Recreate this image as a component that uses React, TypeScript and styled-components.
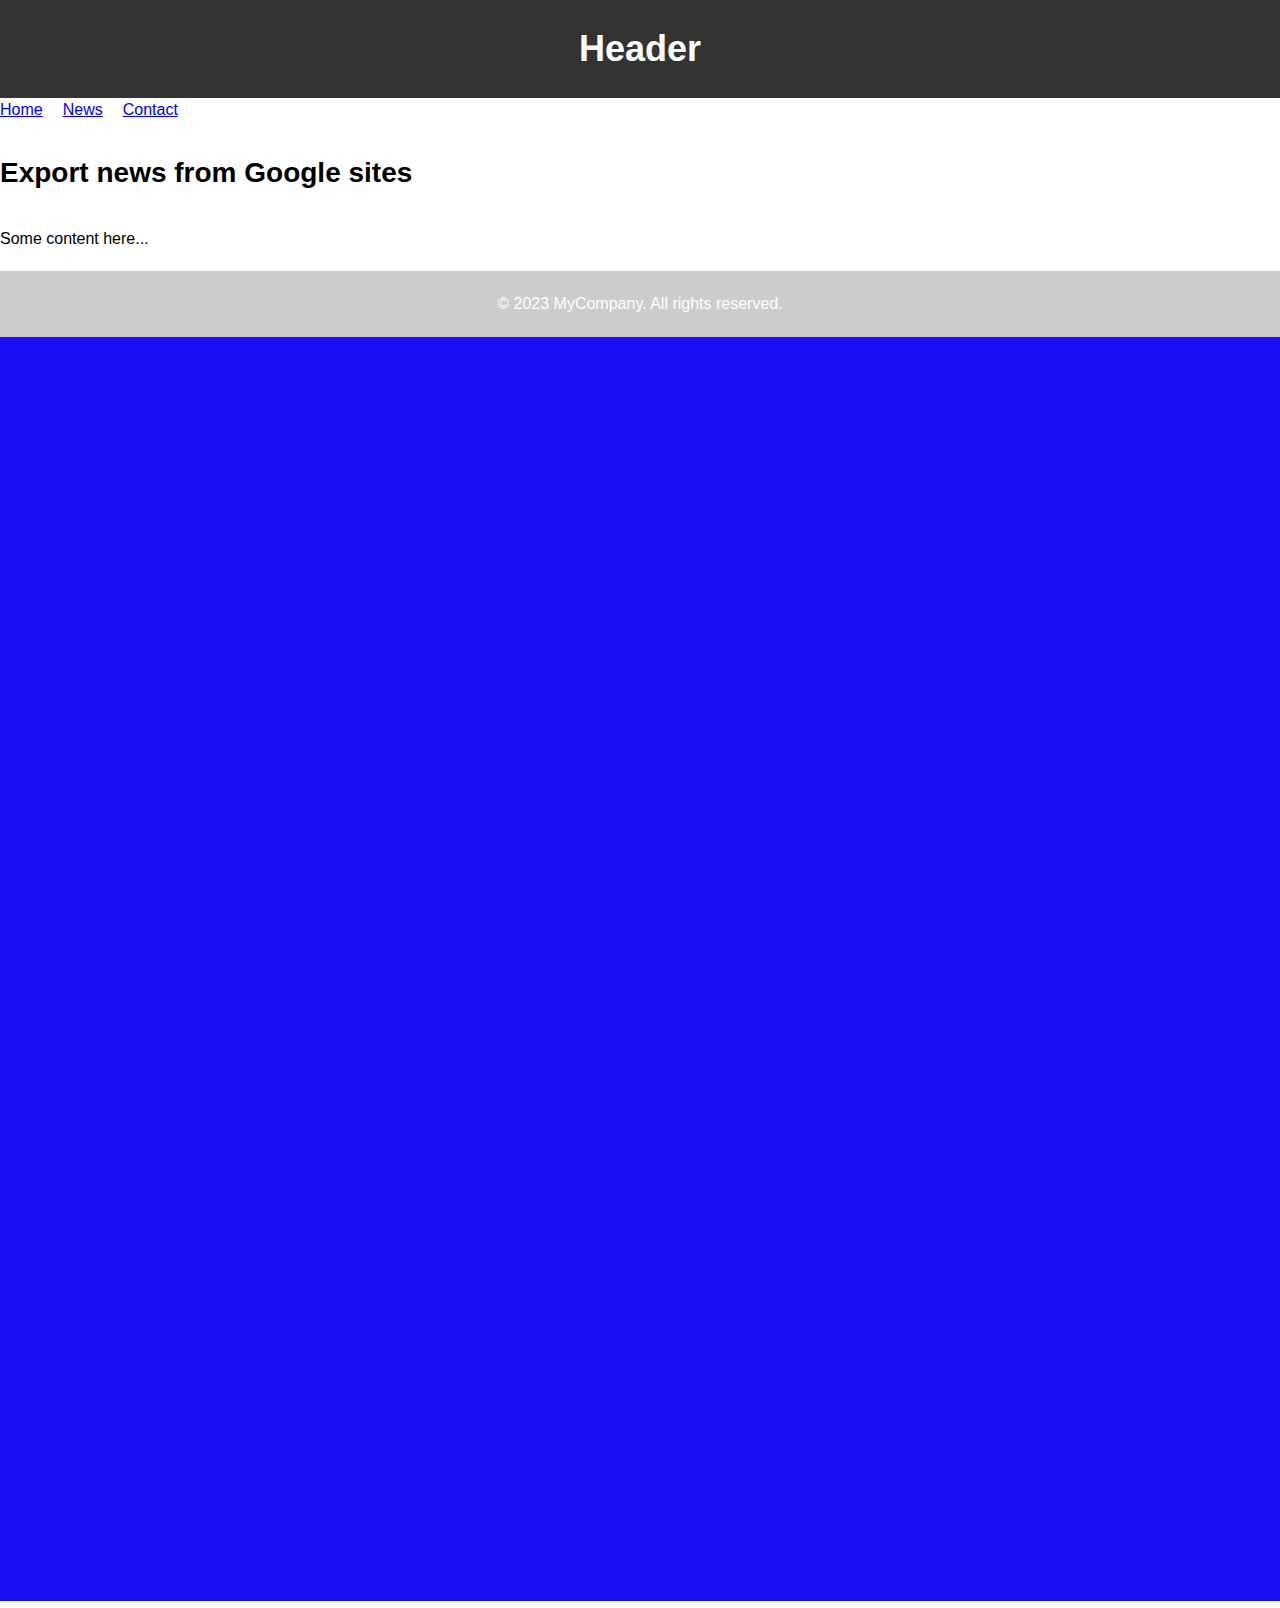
import React from 'react'
import styled, { createGlobalStyle } from 'styled-components'

const GlobalStyle = createGlobalStyle`
body{
    margin:0;
    background-color:#ffffff;
    font-family:"Liberation Sans", Arial, sans-serif;
}
`
const Page = styled.div`
display:flex;
flex-direction:column;
height:1601px;
background-color:#1b0ef5;
`
const Header = styled.header`
height:98px;
display:flex;
align-items:center;
justify-content:center;
background-color:#333333;
`
const HeaderTitle = styled.h1`
margin:0;
font-size:36px;
font-weight:700;
color:#ffffff;
`
const Main = styled.main`
background-color:#ffffff;
padding-bottom:23px;
`
const Nav = styled.nav`
display:flex;
gap:20px;
padding-top:3px;
`
const NavLink = styled.a`
color:#0000ee;
font-size:16px;
text-decoration:underline;
`
const Title = styled.h2`
margin:38px 0 41px;
font-size:28px;
font-weight:700;
color:#000000;
`
const Text = styled.p`
margin:0;
font-size:16px;
color:#000000;
`
const Footer = styled.footer`
padding:24px 0;
height:18px;
display:flex;
align-items:center;
justify-content:center;
background-color:#cccccc;
color:#ffffff;
font-size:16px;
`

const links = ['Home', 'News', 'Contact']

export default function App() {
    return (
        <>
            <GlobalStyle />
            <Page>
                <Header>
                    <HeaderTitle>Header</HeaderTitle>
                </Header>
                <Main>
                    <Nav>
                        {links.map((l) => (
                            <NavLink key={l} href="#">{l}</NavLink>
                        ))}
                    </Nav>
                    <Title>Export news from Google sites</Title>
                    <Text>Some content here...</Text>
                </Main>
                <Footer>© 2023 MyCompany. All rights reserved.</Footer>
            </Page>
        </>
    )
}
